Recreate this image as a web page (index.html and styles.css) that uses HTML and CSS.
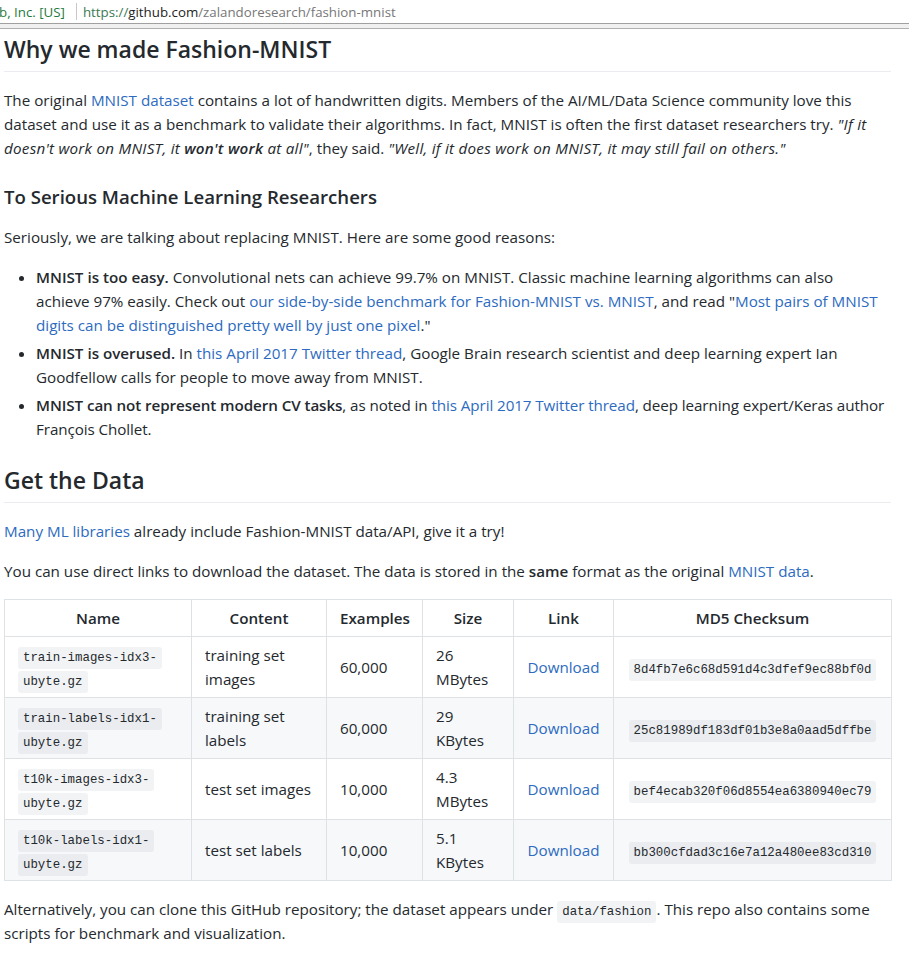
FILE: index.html
```html
<!DOCTYPE html>
<html>
<head>
<meta charset="utf-8">
<link rel="stylesheet" href="styles.css">
</head>
<body>
<div class="urlbar">
  <span class="cert">b, Inc. [US]</span>
  <span class="sep"></span>
  <span class="url"><span class="scheme">https://</span><span class="host">github.com</span>/zalandoresearch/fashion-mnist</span>
</div>
<div class="rule"></div>
<article class="markdown">
  <h2>Why we made Fashion-MNIST</h2>
  <p>The original <a href="#">MNIST dataset</a> contains a lot of handwritten digits. Members of the AI/ML/Data Science community love this dataset and use it as a benchmark to validate their algorithms. In fact, MNIST is often the first dataset researchers try. <em>"If it doesn't work on MNIST, it <strong>won't work</strong> at all"</em>, they said. <em>"Well, if it does work on MNIST, it may still fail on others."</em></p>
  <h3>To Serious Machine Learning Researchers</h3>
  <p>Seriously, we are talking about replacing MNIST. Here are some good reasons:</p>
  <ul>
    <li><strong>MNIST is too easy.</strong> Convolutional nets can achieve 99.7% on MNIST. Classic machine learning algorithms can also achieve 97% easily. Check out <a href="#">our side-by-side benchmark for Fashion-MNIST vs. MNIST</a>, and read "<a href="#">Most pairs of MNIST digits can be distinguished pretty well by just one pixel</a>."</li>
    <li><strong>MNIST is overused.</strong> In <a href="#">this April 2017 Twitter thread</a>, Google Brain research scientist and deep learning expert Ian Goodfellow calls for people to move away from MNIST.</li>
    <li class="tight"><strong>MNIST can not represent modern CV tasks</strong>, as noted in <a href="#">this April 2017 Twitter thread</a>, deep learning expert/Keras author François Chollet.</li>
  </ul>
  <h2>Get the Data</h2>
  <p><a href="#">Many ML libraries</a> already include Fashion-MNIST data/API, give it a try!</p>
  <p>You can use direct links to download the dataset. The data is stored in the <strong>same</strong> format as the original <a href="#">MNIST data</a>.</p>
  <table>
    <thead>
      <tr>
        <th class="c-name">Name</th>
        <th class="c-content">Content</th>
        <th class="c-ex">Examples</th>
        <th class="c-size">Size</th>
        <th class="c-link">Link</th>
        <th class="c-md5">MD5 Checksum</th>
      </tr>
    </thead>
    <tbody>
      <tr>
        <td><code>train-images-idx3-ubyte.gz</code></td>
        <td>training set images</td>
        <td>60,000</td>
        <td>26 MBytes</td>
        <td class="center"><a href="#">Download</a></td>
        <td class="center"><code>8d4fb7e6c68d591d4c3dfef9ec88bf0d</code></td>
      </tr>
      <tr>
        <td><code>train-labels-idx1-ubyte.gz</code></td>
        <td>training set labels</td>
        <td>60,000</td>
        <td>29 KBytes</td>
        <td class="center"><a href="#">Download</a></td>
        <td class="center"><code>25c81989df183df01b3e8a0aad5dffbe</code></td>
      </tr>
      <tr>
        <td><code>t10k-images-idx3-ubyte.gz</code></td>
        <td>test set images</td>
        <td>10,000</td>
        <td>4.3 MBytes</td>
        <td class="center"><a href="#">Download</a></td>
        <td class="center"><code>bef4ecab320f06d8554ea6380940ec79</code></td>
      </tr>
      <tr>
        <td><code>t10k-labels-idx1-ubyte.gz</code></td>
        <td>test set labels</td>
        <td>10,000</td>
        <td>5.1 KBytes</td>
        <td class="center"><a href="#">Download</a></td>
        <td class="center"><code>bb300cfdad3c16e7a12a480ee83cd310</code></td>
      </tr>
    </tbody>
  </table>
  <p>Alternatively, you can clone this GitHub repository; the dataset appears under <code>data/fashion</code>. This repo also contains some scripts for benchmark and visualization.</p>
</article>
</body>
</html>
```

FILE: styles.css
```css
html, body {
  margin: 0;
  padding: 0;
  background: #fff;
}
body {
  font-family: "Open Sans", "Noto Sans", sans-serif;
  color: #24292e;
  overflow: hidden;
}
.urlbar {
  height: 23px;
  display: flex;
  align-items: center;
  font-size: 13.3px;
  white-space: nowrap;
  color: #777;
}
.cert {
  color: #1f7a3c;
  margin-left: -1px;
}
.sep {
  width: 1px;
  height: 17px;
  background: #c8c8c8;
  margin: 0 6px 0 11px;
}
.scheme { color: #3b7a52; }
.host { color: #222; }
.rule {
  height: 4px;
  background: #f0f0f0;
  border-top: 1px solid #a0a0a0;
  border-bottom: 1px solid #b0b0b0;
}
.markdown {
  padding: 5px 21px 0 4px;
  font-size: 15.2px;
  line-height: 24px;
}
.markdown a {
  color: #2d6bc0;
  text-decoration: none;
}
.markdown strong { font-weight: 600; }
.markdown em { letter-spacing: 0.25px; }
.markdown h2 {
  margin: 0 0 16px;
  font-size: 23px;
  line-height: 30px;
  font-weight: 600;
  padding-bottom: 7px;
  border-bottom: 1px solid #eaecef;
  margin-right: -3px;
}
.markdown * + h2 { margin-top: 24px; }
.markdown h3 {
  margin: 24px 0 16px;
  font-size: 18.6px;
  line-height: 25px;
  font-weight: 600;
}
.markdown p {
  margin: 0 0 16px;
}
.markdown ul {
  margin: 0 0 16px;
  padding-left: 32px;
}
.markdown li + li { margin-top: 4px; }
.markdown li.tight { letter-spacing: -0.08px; }
.markdown code {
  font-family: "Liberation Mono", "DejaVu Sans Mono", monospace;
  font-size: 12.4px;
  line-height: 14px;
  letter-spacing: 0;
  padding: 4px 5px;
  background: #f2f3f4;
  border-radius: 3px;
  -webkit-box-decoration-break: clone;
  box-decoration-break: clone;
}
.markdown table {
  border-collapse: collapse;
  table-layout: fixed;
  width: 887px;
  margin: 0 0 16px;
}
.markdown th, .markdown td {
  box-sizing: border-box;
  border: 1px solid #dfe2e5;
  padding: 6px 13px;
  text-align: left;
}
.markdown th {
  font-weight: 600;
  text-align: center;
}
.markdown td.center { text-align: center; }
.markdown tbody tr:nth-child(odd) { background: #fff; }
.markdown tbody tr:nth-child(even) { background: #f6f8fa; }
.markdown tbody tr:nth-child(even) code { background: #eaecef; }
.c-name { width: 187px; }
.c-content { width: 135px; }
.c-ex { width: 96px; }
.c-size { width: 91px; }
.c-link { width: 100px; }
.c-md5 { width: 278px; }
```
